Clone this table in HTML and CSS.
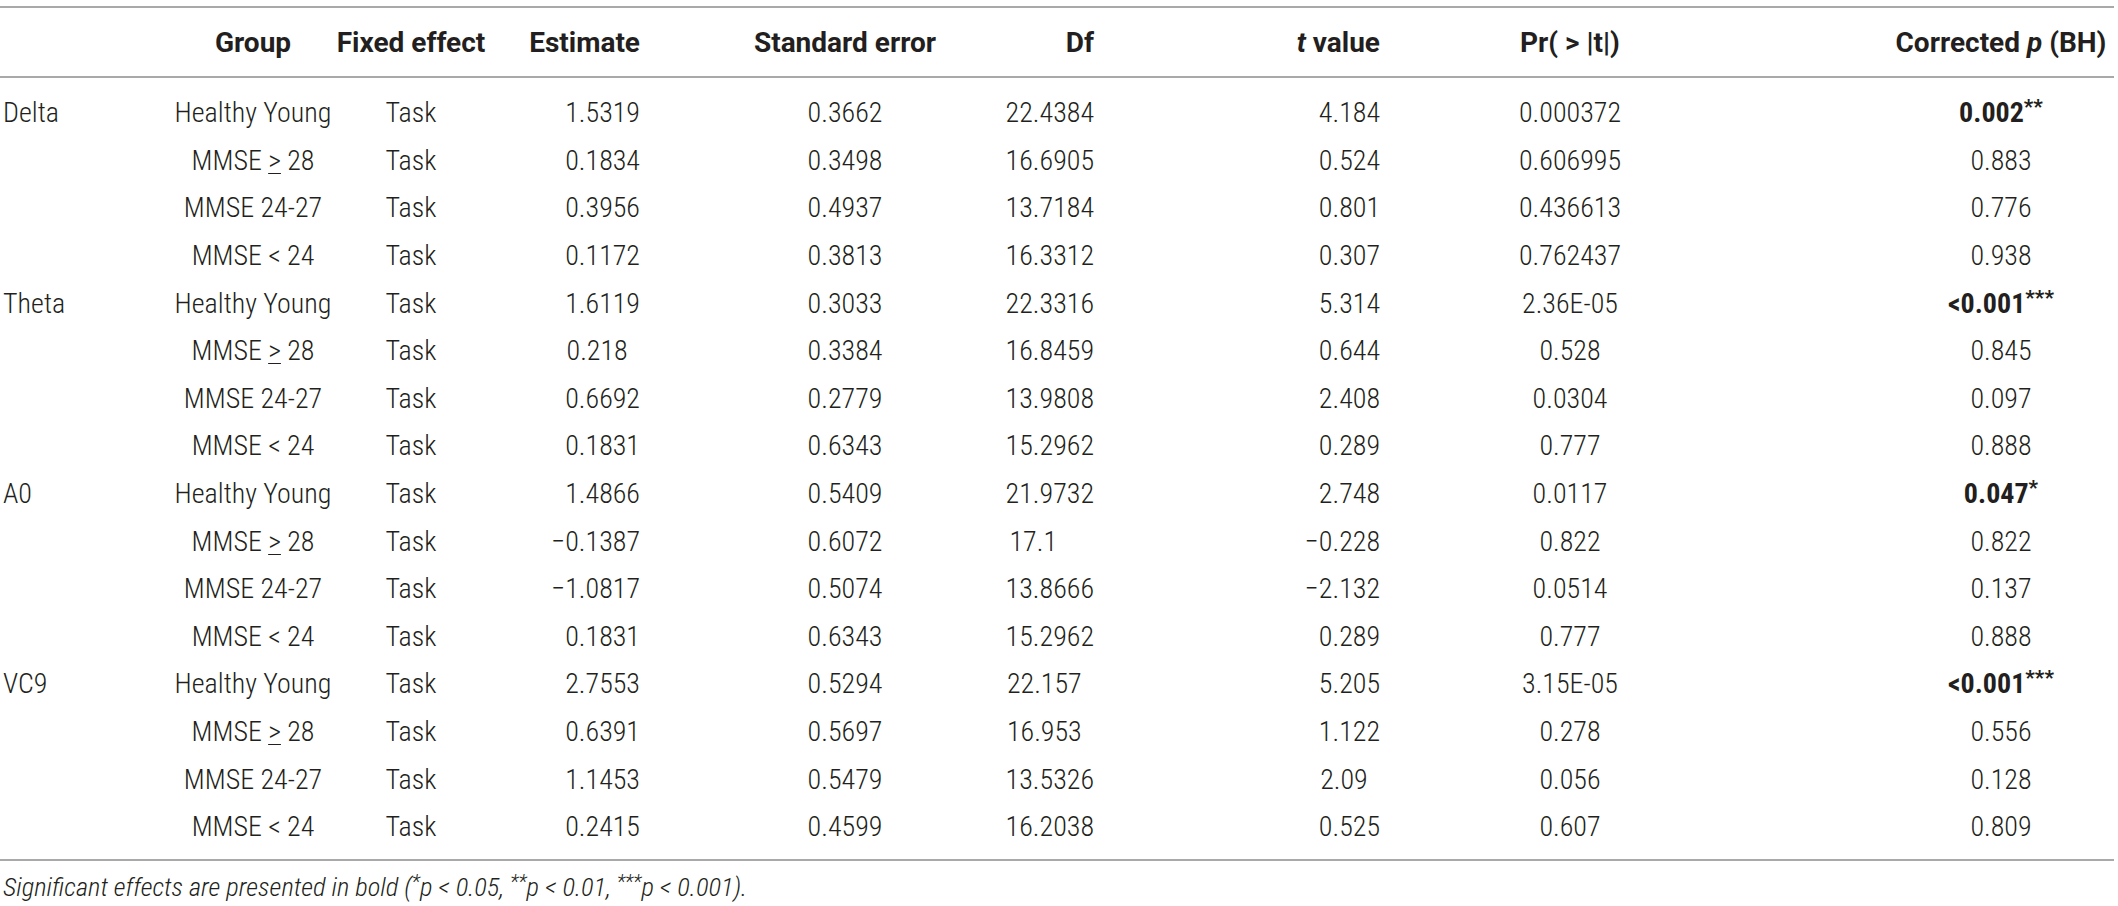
FILE: index.html
```html
<!DOCTYPE html>
<html>
  <head>
    <meta charset="utf-8">
    <title>Mixed model results</title>
    <link rel="stylesheet" href="styles.css">
  </head>
  <body>
    <div class="tbl">
      <div class="row head">
        <div class="c"></div>
        <div class="c mid">Group</div>
        <div class="c mid">Fixed effect</div>
        <div class="c end">Estimate</div>
        <div class="c mid">Standard error</div>
        <div class="c end">Df</div>
        <div class="c end"><span><i>t</i> value</span></div>
        <div class="c mid">Pr( &gt; |t|)</div>
        <div class="c mid last"><span>Corrected <i>p</i> (BH)</span></div>
      </div>

      <div class="rows">
        <div class="row">
          <div class="c">Delta</div>
          <div class="c mid">Healthy Young</div>
          <div class="c mid">Task</div>
          <div class="c end">1.5319</div>
          <div class="c mid">0.3662</div>
          <div class="c end">22.4384</div>
          <div class="c end">4.184</div>
          <div class="c mid">0.000372</div>
          <div class="c mid last"><b>0.002<sup>**</sup></b></div>
        </div>
        <div class="row">
          <div class="c"></div>
          <div class="c mid"><span>MMSE <u>&gt;</u> 28</span></div>
          <div class="c mid">Task</div>
          <div class="c end">0.1834</div>
          <div class="c mid">0.3498</div>
          <div class="c end">16.6905</div>
          <div class="c end">0.524</div>
          <div class="c mid">0.606995</div>
          <div class="c mid last">0.883</div>
        </div>
        <div class="row">
          <div class="c"></div>
          <div class="c mid">MMSE 24-27</div>
          <div class="c mid">Task</div>
          <div class="c end">0.3956</div>
          <div class="c mid">0.4937</div>
          <div class="c end">13.7184</div>
          <div class="c end">0.801</div>
          <div class="c mid">0.436613</div>
          <div class="c mid last">0.776</div>
        </div>
        <div class="row">
          <div class="c"></div>
          <div class="c mid">MMSE &lt; 24</div>
          <div class="c mid">Task</div>
          <div class="c end">0.1172</div>
          <div class="c mid">0.3813</div>
          <div class="c end">16.3312</div>
          <div class="c end">0.307</div>
          <div class="c mid">0.762437</div>
          <div class="c mid last">0.938</div>
        </div>

        <div class="row">
          <div class="c">Theta</div>
          <div class="c mid">Healthy Young</div>
          <div class="c mid">Task</div>
          <div class="c end">1.6119</div>
          <div class="c mid">0.3033</div>
          <div class="c end">22.3316</div>
          <div class="c end">5.314</div>
          <div class="c mid">2.36E-05</div>
          <div class="c mid last"><b>&lt;0.001<sup>***</sup></b></div>
        </div>
        <div class="row">
          <div class="c"></div>
          <div class="c mid"><span>MMSE <u>&gt;</u> 28</span></div>
          <div class="c mid">Task</div>
          <div class="c end"><span class="p1">0.218</span></div>
          <div class="c mid">0.3384</div>
          <div class="c end">16.8459</div>
          <div class="c end">0.644</div>
          <div class="c mid">0.528</div>
          <div class="c mid last">0.845</div>
        </div>
        <div class="row">
          <div class="c"></div>
          <div class="c mid">MMSE 24-27</div>
          <div class="c mid">Task</div>
          <div class="c end">0.6692</div>
          <div class="c mid">0.2779</div>
          <div class="c end">13.9808</div>
          <div class="c end">2.408</div>
          <div class="c mid">0.0304</div>
          <div class="c mid last">0.097</div>
        </div>
        <div class="row">
          <div class="c"></div>
          <div class="c mid">MMSE &lt; 24</div>
          <div class="c mid">Task</div>
          <div class="c end">0.1831</div>
          <div class="c mid">0.6343</div>
          <div class="c end">15.2962</div>
          <div class="c end">0.289</div>
          <div class="c mid">0.777</div>
          <div class="c mid last">0.888</div>
        </div>

        <div class="row">
          <div class="c">A0</div>
          <div class="c mid">Healthy Young</div>
          <div class="c mid">Task</div>
          <div class="c end">1.4866</div>
          <div class="c mid">0.5409</div>
          <div class="c end">21.9732</div>
          <div class="c end">2.748</div>
          <div class="c mid">0.0117</div>
          <div class="c mid last"><b>0.047<sup>*</sup></b></div>
        </div>
        <div class="row">
          <div class="c"></div>
          <div class="c mid"><span>MMSE <u>&gt;</u> 28</span></div>
          <div class="c mid">Task</div>
          <div class="c end">&minus;0.1387</div>
          <div class="c mid">0.6072</div>
          <div class="c end"><span class="p3">17.1</span></div>
          <div class="c end">&minus;0.228</div>
          <div class="c mid">0.822</div>
          <div class="c mid last">0.822</div>
        </div>
        <div class="row">
          <div class="c"></div>
          <div class="c mid">MMSE 24-27</div>
          <div class="c mid">Task</div>
          <div class="c end">&minus;1.0817</div>
          <div class="c mid">0.5074</div>
          <div class="c end">13.8666</div>
          <div class="c end">&minus;2.132</div>
          <div class="c mid">0.0514</div>
          <div class="c mid last">0.137</div>
        </div>
        <div class="row">
          <div class="c"></div>
          <div class="c mid">MMSE &lt; 24</div>
          <div class="c mid">Task</div>
          <div class="c end">0.1831</div>
          <div class="c mid">0.6343</div>
          <div class="c end">15.2962</div>
          <div class="c end">0.289</div>
          <div class="c mid">0.777</div>
          <div class="c mid last">0.888</div>
        </div>

        <div class="row">
          <div class="c">VC9</div>
          <div class="c mid">Healthy Young</div>
          <div class="c mid">Task</div>
          <div class="c end">2.7553</div>
          <div class="c mid">0.5294</div>
          <div class="c end"><span class="p1">22.157</span></div>
          <div class="c end">5.205</div>
          <div class="c mid">3.15E-05</div>
          <div class="c mid last"><b>&lt;0.001<sup>***</sup></b></div>
        </div>
        <div class="row">
          <div class="c"></div>
          <div class="c mid"><span>MMSE <u>&gt;</u> 28</span></div>
          <div class="c mid">Task</div>
          <div class="c end">0.6391</div>
          <div class="c mid">0.5697</div>
          <div class="c end"><span class="p1">16.953</span></div>
          <div class="c end">1.122</div>
          <div class="c mid">0.278</div>
          <div class="c mid last">0.556</div>
        </div>
        <div class="row">
          <div class="c"></div>
          <div class="c mid">MMSE 24-27</div>
          <div class="c mid">Task</div>
          <div class="c end">1.1453</div>
          <div class="c mid">0.5479</div>
          <div class="c end">13.5326</div>
          <div class="c end"><span class="p1">2.09</span></div>
          <div class="c mid">0.056</div>
          <div class="c mid last">0.128</div>
        </div>
        <div class="row">
          <div class="c"></div>
          <div class="c mid">MMSE &lt; 24</div>
          <div class="c mid">Task</div>
          <div class="c end">0.2415</div>
          <div class="c mid">0.4599</div>
          <div class="c end">16.2038</div>
          <div class="c end">0.525</div>
          <div class="c mid">0.607</div>
          <div class="c mid last">0.809</div>
        </div>
      </div>
    </div>

    <p class="note">Significant effects are presented in bold (<sup>*</sup>p &lt; 0.05, <sup>**</sup>p &lt; 0.01, <sup>***</sup>p &lt; 0.001).</p>
  </body>
</html>
```

FILE: styles.css
```css
html, body {
  margin: 0;
  padding: 0;
  background: #fff;
  color: #231f20;
  font-family: Roboto, "Liberation Sans", sans-serif;
  font-weight: 300;
  font-stretch: 78%;
  font-size: 28px;
}

.tbl {
  width: 2114px;
  margin-top: 6px;
  border-top: 2px solid #a9a9a9;
  border-bottom: 2px solid #a9a9a9;
}

.row {
  display: grid;
  grid-template-columns: 150px 206px 110px 174px 410px 44px 286px 380px 354px;
  height: 47.6px;
}

.head {
  height: 68px;
  font-weight: 700;
  font-stretch: 92%;
  border-bottom: 2px solid #a9a9a9;
}

.rows {
  padding: 11px 0 8px;
}

.c {
  display: flex;
  align-items: center;
  white-space: nowrap;
  padding-left: 3px;
}

.mid {
  justify-content: center;
  padding-left: 0;
}

.end {
  justify-content: flex-end;
  padding-left: 0;
}

.last {
  padding-left: 128px;
}

b {
  font-weight: 700;
  font-stretch: 85%;
}

sup {
  font-size: 0.75em;
  line-height: 0;
  vertical-align: 0.4em;
}

u {
  text-decoration-thickness: 1px;
  text-underline-offset: 3px;
}

.p1 {
  padding-right: 0.44em;
}

.p3 {
  padding-right: 1.32em;
}

.note {
  margin: 10px 0 0 3px;
  font-size: 26.5px;
  font-stretch: 75%;
  font-style: italic;
}
```
